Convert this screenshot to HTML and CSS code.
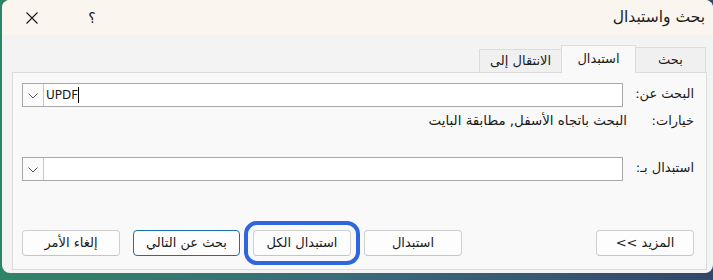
FILE: index.html
```html
<!DOCTYPE html>
<html lang="ar" dir="rtl">
<head>
<meta charset="utf-8">
<link rel="stylesheet" href="styles.css">
</head>
<body>
<div class="window">
  <div class="titlebar">
    <div class="title">بحث واستبدال</div>
    <div class="spacer"></div>
    <div class="tb-btn help">؟</div>
    <div class="tb-btn close">
      <svg width="12" height="12" viewBox="0 0 12 12"><path d="M0.5 0.5 L11.5 11.5 M11.5 0.5 L0.5 11.5" stroke="#1a1a1a" stroke-width="1.1" fill="none"/></svg>
    </div>
  </div>
  <div class="tabs">
    <div class="tab">بحث</div>
    <div class="tab active">استبدال</div>
    <div class="tab">الانتقال إلى</div>
  </div>
  <div class="panel">
    <div class="form">
      <div class="label">البحث عن:</div>
      <div class="combo">
        <div class="drop"><svg width="10" height="6" viewBox="0 0 10 6"><path d="M0.5 0.5 L5 5 L9.5 0.5" stroke="#555" stroke-width="1" fill="none"/></svg></div>
        <div class="value">UPDF<span class="caret"></span></div>
      </div>
      <div class="label opt">خيارات:</div>
      <div class="optval">البحث باتجاه الأسفل, مطابقة البايت</div>
      <div class="label">استبدال بـ:</div>
      <div class="combo">
        <div class="drop"><svg width="10" height="6" viewBox="0 0 10 6"><path d="M0.5 0.5 L5 5 L9.5 0.5" stroke="#555" stroke-width="1" fill="none"/></svg></div>
        <div class="value"></div>
      </div>
    </div>
    <div class="buttons">
      <button class="btn">المزيد &gt;&gt;</button>
      <div class="spacer"></div>
      <button class="btn">استبدال</button>
      <button class="btn focus">استبدال الكل</button>
      <button class="btn default wide">بحث عن التالي</button>
      <button class="btn">إلغاء الأمر</button>
    </div>
  </div>
</div>
</body>
</html>
```
FILE: styles.css
```css
* { box-sizing: border-box; }
html, body { margin: 0; padding: 0; }
body {
  width: 713px;
  height: 280px;
  overflow: hidden;
  background: linear-gradient(to right, #2f8467 0%, #3a6a7a 50%, #33466a 100%);
  font-family: "DejaVu Sans", "Noto Sans", sans-serif;
  color: #1a1a1a;
}
.window {
  width: 711px;
  height: 273px;
  margin-right: 0;
  margin-left: auto;
  background: #f3f3f3;
  border-radius: 8px;
  overflow: hidden;
  display: flex;
  flex-direction: column;
}
.titlebar {
  height: 35px;
  background: #faf6ef;
  display: flex;
  align-items: center;
  flex-shrink: 0;
}
.title {
  font-size: 15.5px;
  padding-right: 8px;
  padding-bottom: 1px;
}
.spacer { flex: 1; }
.tb-btn {
  height: 35px;
  display: flex;
  align-items: center;
  justify-content: center;
}
.help {
  width: 50px;
  font-size: 14px;
  margin-left: 5px;
}
.close {
  width: 60px;
}
.tabs {
  display: flex;
  align-items: flex-end;
  height: 37px;
  padding-right: 7px;
  flex-shrink: 0;
}
.tab {
  height: 25px;
  font-size: 13px;
  display: flex;
  align-items: center;
  justify-content: center;
  border: 1px solid #dcdcdc;
  border-bottom: none;
  background: #f0f0f0;
  padding-bottom: 2px;
}
.tab:nth-child(1) { width: 70px; border-left: none; height: 25px; }
.tab:nth-child(3) { width: 82px; border-right: none; height: 23px; }
.tab.active {
  width: 75px;
  height: 28px;
  background: #f9f9f9;
  position: relative;
  top: 1px;
  z-index: 1;
}
.panel {
  height: 198px;
  margin-left: 10px;
  margin-right: 6px;
  background: #f9f9f9;
  border: 1px solid #dcdcdc;
  display: flex;
  flex-direction: column;
  padding: 10px 12px 0 9px;
}
.form {
  display: grid;
  grid-template-columns: 71px 1fr;
  grid-template-rows: 24px 50px 24px;
  align-items: center;
}
.label {
  font-size: 13px;
  padding-bottom: 3px;
}
.label.opt { align-self: start; padding-top: 6px; padding-bottom: 0; }
.optval {
  font-size: 13.4px;
  margin-right: -4px;
  align-self: start;
  padding-top: 6px;
}
.combo {
  height: 24px;
  border: 1px solid #a8a8a8;
  background: #ffffff;
  display: flex;
  direction: ltr;
  align-items: stretch;
}
.drop {
  width: 21px;
  border-right: 1px solid #c8c8c8;
  background: #fbfbfb;
  display: flex;
  align-items: center;
  justify-content: center;
  padding-top: 1px;
}
.value {
  font-family: "DejaVu Sans", sans-serif;
  font-size: 12px;
  padding-left: 2px;
  display: flex;
  align-items: center;
}
.caret {
  display: inline-block;
  width: 1px;
  height: 16px;
  background: #000;
}
.buttons {
  display: flex;
  gap: 13px;
  margin-top: auto;
  margin-bottom: 13px;
}
.btn {
  width: 98px;
  height: 26px;
  font-family: "DejaVu Sans", "Noto Sans", sans-serif;
  font-size: 13px;
  color: #1a1a1a;
  background: #fdfdfd;
  border: 1px solid #d0d0d0;
  border-bottom-color: #c4c4c4;
  border-radius: 4px;
  padding: 0 0 2px 0;
}
.btn.wide { width: 107px; }
.btn.default { border-color: #1a6fb0; }
.btn.focus {
  outline: 4px solid #2f66dd;
  outline-offset: 5px;
}
```
